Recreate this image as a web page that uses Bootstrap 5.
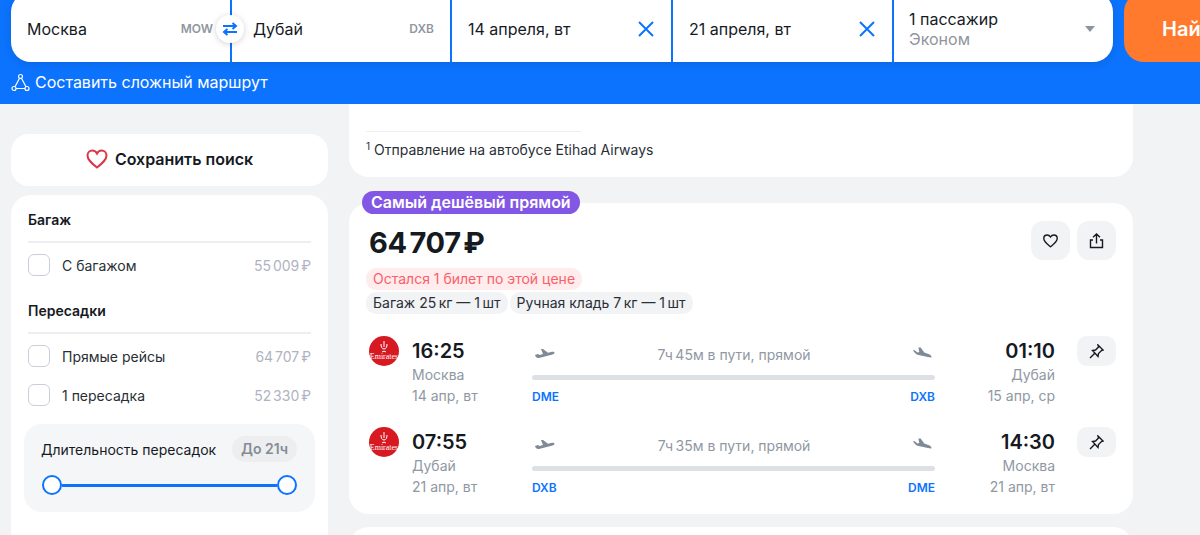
<!DOCTYPE html>
<html lang="ru">

<head>
    <meta charset="UTF-8">
    <meta name="viewport" content="width=device-width, initial-scale=1.0">
    <title>Авиабилеты Москва — Дубай</title>
    <link href="https://cdn.jsdelivr.net/npm/bootstrap@5.3.0/dist/css/bootstrap.min.css" rel="stylesheet">
    <style>
        html, body { height: 535px; overflow: hidden; }
        body { background: #f2f3f5; font-family: Inter, "Noto Sans", sans-serif; color: #161a1f; font-size: 14px; }

        /* шапка с поиском */
        .top-bar { background: #0c73fe; height: 104px; overflow: hidden; position: relative; z-index: 2; }
        .search-row { margin-top: -8px; padding-left: 11px; width: 1400px; height: 70px; }
        .search-form { width: 1102px; height: 70px; border-radius: 20px; overflow: hidden; box-shadow: 0 2px 8px rgba(0, 0, 0, .12); gap: 2px; }
        .search-field { background: #fff; height: 70px; padding: 4px 16px 0 16px; font-size: 16px; position: relative; }
        .f-from { width: 219px; padding-right: 17px; }
        .f-to { width: 218px; padding-left: 21px; }
        .f-date { width: 219px; }
        .f-pass { flex: 1; padding: 4px 18px 0 15px; }
        .iata { font-size: 12px; font-weight: 600; color: #9097a0; }
        .swap-btn { position: absolute; left: 205px; top: 23px; width: 28px; height: 28px; border-radius: 50%; background: #fff; box-shadow: 0 1px 6px rgba(0, 0, 0, .18); z-index: 3; }
        .pass-sub { color: #8f959c; font-size: 16px; line-height: 20px; }
        .pass-main { font-size: 16px; line-height: 20px; }
        .caret-down { width: 0; height: 0; border-left: 5px solid transparent; border-right: 5px solid transparent; border-top: 6px solid #8f959c; }
        .find-btn { margin-left: 11px; width: 180px; height: 70px; padding: 4px 0 0 38px; border-radius: 20px; background: #ff7a2d; color: #fff; font-size: 20px; font-weight: 600; }
        .route-link { color: #fff; font-size: 16px; line-height: 20px; padding: 10px 0 0 11px; gap: 5px; }

        /* колонки */
        .page-cols { padding-left: 11px; gap: 21px; }
        .side-col { width: 317px; padding-top: 30px; }
        .result-col { width: 784px; }

        .save-box { background: #fff; height: 52px; border-radius: 18px; font-size: 16px; font-weight: 600; gap: 7px; margin-bottom: 9px; padding-bottom: 3px; }
        .filter-box { background: #fff; border-radius: 20px; padding: 15px 17px 0 17px; height: 400px; }
        .filter-title { font-size: 14px; font-weight: 600; line-height: 20px; padding-bottom: 11px; border-bottom: 2px solid #eceef0; margin-bottom: 11px; }
        .filter-title-next { margin-top: 25px; }
        .filter-row { height: 22px; margin-bottom: 17px; font-size: 14px; color: #2a2f36; }
        .filter-row-last { margin-bottom: 18px; }
        .tick-box { width: 22px; height: 22px; border: 1px solid #c9ced8; border-radius: 6px; margin-right: 12px; flex-shrink: 0; background: #fff; }
        .filter-price { color: #afb3bf; font-size: 14px; margin-left: auto; word-spacing: -2px; }
        .duration-box { background: #f5f6f8; border-radius: 18px; margin: 0 -4px; padding: 12px 18px 0 17px; height: 88px; }
        .duration-tag { background: #eceef0; color: #858c95; font-weight: 600; border-radius: 13px; padding: 0 9px; line-height: 26px; font-size: 14px; }
        .range-line { margin: 13px 0 0 1px; height: 20px; }
        .range-thumb { width: 20px; height: 20px; border-radius: 50%; border: 2px solid #0c73fe; background: #fff; flex-shrink: 0; }
        .range-track { flex: 1; height: 3px; background: #0c73fe; }

        /* билеты */
        .ticket { background: #fff; border-radius: 20px; position: relative; }
        .ticket-prev { height: 73px; border-radius: 0 0 20px 20px; margin-bottom: 26px; padding: 27px 17px 0 17px; }
        .prev-note { border-top: 1px solid #eceef0; width: 215px; padding-top: 8px; white-space: nowrap; font-size: 14px; line-height: 20px; color: #2a2f36; }
        .prev-note sup { font-size: 10px; }
        .ticket-main { height: 311px; padding: 18px 17px 0 20px; margin-bottom: 13px; }
        .ticket-next { height: 40px; }
        .promo-tag { position: absolute; left: 13px; top: -12px; background: #8257e6; color: #fff; font-weight: 600; font-size: 16px; line-height: 23px; border-radius: 12px; padding: 0 9px; white-space: nowrap; }
        .price-big { font-size: 29px; font-weight: 700; line-height: 40px; padding-top: 1px; margin-top: 1px; word-spacing: -4px; letter-spacing: -.3px; height: 40px; }
        .round-btns { gap: 7px; }
        .round-btn { width: 39px; height: 39px; border-radius: 12px; background: #f2f3f5; }
        .red-line { margin: 6px 0 0 -3px; }
        .grey-line { margin: 2px 0 21px -3px; gap: 2px; }
        .pill-red { background: #ffeced; color: #f9606a; border-radius: 10px; padding: 0 7px; font-size: 14px; line-height: 22px; }
        .pill-grey { background: #f2f3f5; color: #2a2f36; border-radius: 10px; padding: 0 7px; font-size: 14px; line-height: 22px; }
        .flight-row { height: 91px; }
        .emirates-logo { width: 30px; height: 30px; border-radius: 50%; background: #d71a21; color: #fff; font-family: "Liberation Serif", serif; font-size: 8px; line-height: 8px; flex-shrink: 0; margin-top: 1px; }
        .time-col { width: 120px; margin-left: 13px; }
        .time-big { font-size: 20px; font-weight: 600; height: 29px; line-height: 32px; }
        .city-line { color: #8f98a3; font-size: 14px; line-height: 21px; }
        .middle-col { width: 403px; }
        .middle-head { height: 31px; color: #8f98a3; font-size: 14px; padding-top: 8px; }
        .plane-up { margin: -3px 0 0 2px; }
        .plane-down { margin: -3px 3px 0 0; }
        .path-bar { height: 5px; background: #dde0e5; border-radius: 3px; margin-top: 9px; }
        .iata-link { color: #0c73fe; font-size: 12px; font-weight: 600; line-height: 20px; margin-top: 7px; }
        .end-col { width: 120px; text-align: right; }
        .pin-btn { width: 39px; height: 30px; border-radius: 10px; background: #f2f3f5; margin: 1px 0 0 22px; }
    </style>
</head>

<body>
    <!-- Шапка -->
    <header class="top-bar">
        <div class="search-row d-flex">
            <div class="search-form d-flex position-relative">
                <div class="search-field f-from d-flex align-items-center justify-content-between"><span>Москва</span><span class="iata">MOW</span></div>
                <div class="swap-btn d-flex align-items-center justify-content-center">
                    <svg width="16" height="14" viewBox="0 0 16 14" fill="none" stroke="#0c73fe" stroke-width="2"><path d="M1 4h13M10.500 1L14 4l-3.500 3M15 10H2M5.500 7L2 10l3.500 3"/></svg>
                </div>
                <div class="search-field f-to d-flex align-items-center justify-content-between"><span>Дубай</span><span class="iata">DXB</span></div>
                <div class="search-field f-date d-flex align-items-center justify-content-between"><span>14 апреля, вт</span>
                    <svg width="18" height="18" viewBox="0 0 18 18" stroke="#0c73fe" stroke-width="2" fill="none"><path d="M2 2l14 14M16 2L2 16"/></svg>
                </div>
                <div class="search-field f-date d-flex align-items-center justify-content-between"><span>21 апреля, вт</span>
                    <svg width="18" height="18" viewBox="0 0 18 18" stroke="#0c73fe" stroke-width="2" fill="none"><path d="M2 2l14 14M16 2L2 16"/></svg>
                </div>
                <div class="search-field f-pass d-flex align-items-center justify-content-between">
                    <div><div class="pass-main">1 пассажир</div><div class="pass-sub">Эконом</div></div>
                    <span class="caret-down"></span>
                </div>
            </div>
            <div class="find-btn d-flex align-items-center">Найти</div>
        </div>
        <div class="route-link d-flex align-items-center">
            <svg width="19" height="19" viewBox="0 0 19 19" fill="none" stroke="#fff" stroke-width="1.200"><circle cx="9.500" cy="3.500" r="2"/><circle cx="3" cy="15.500" r="2"/><circle cx="16" cy="15.500" r="2"/><path d="M8.500 5.300L4 13.700M10.500 5.300L15 13.700M5 15.500h9"/></svg>
            <span>Составить сложный маршрут</span>
        </div>
    </header>

    <div class="page-cols d-flex">
        <!-- Фильтры -->
        <aside class="side-col">
            <div class="save-box d-flex align-items-center justify-content-center">
                <svg width="22" height="20" viewBox="0 0 22 20" fill="none" stroke="#dc3545" stroke-width="2"><path d="M11 18.500C6 14.500 1.500 11 1.500 6.500 1.500 3.500 3.700 1.500 6.300 1.500c2 0 3.700 1 4.700 3 1-2 2.700-3 4.700-3 2.600 0 4.800 2 4.800 5 0 4.500-4.500 8-9.500 12z"/></svg>
                <span>Сохранить поиск</span>
            </div>
            <div class="filter-box">
                <div class="filter-title">Багаж</div>
                <div class="filter-row d-flex align-items-center"><span class="tick-box"></span><span>С багажом</span><span class="filter-price">55 009 ₽</span></div>
                <div class="filter-title filter-title-next">Пересадки</div>
                <div class="filter-row d-flex align-items-center"><span class="tick-box"></span><span>Прямые рейсы</span><span class="filter-price">64 707 ₽</span></div>
                <div class="filter-row filter-row-last d-flex align-items-center"><span class="tick-box"></span><span>1 пересадка</span><span class="filter-price">52 330 ₽</span></div>
                <div class="duration-box">
                    <div class="d-flex align-items-center justify-content-between"><span>Длительность пересадок</span><span class="duration-tag">До 21ч</span></div>
                    <div class="range-line d-flex align-items-center"><span class="range-thumb"></span><span class="range-track"></span><span class="range-thumb"></span></div>
                </div>
            </div>
        </aside>

        <!-- Результаты -->
        <main class="result-col">
            <div class="ticket ticket-prev">
                <div class="prev-note"><sup>1</sup> Отправление на автобусе Etihad Airways</div>
            </div>

            <div class="ticket ticket-main">
                <span class="promo-tag">Самый дешёвый прямой</span>
                <div class="d-flex justify-content-between">
                    <div class="price-big">64 707 ₽</div>
                    <div class="d-flex round-btns">
                        <div class="round-btn d-flex align-items-center justify-content-center">
                            <svg width="15" height="14" viewBox="0 0 15 14" fill="none" stroke="#161a1f" stroke-width="1.400"><path d="M7.500 12.800C4 10 .8 7.700.8 4.500.8 2.400 2.400 1 4.200 1c1.400 0 2.500.7 3.300 2 .8-1.300 1.900-2 3.300-2 1.800 0 3.400 1.400 3.400 3.500 0 3.200-3.200 5.500-6.700 8.300z"/></svg>
                        </div>
                        <div class="round-btn d-flex align-items-center justify-content-center">
                            <svg width="15" height="16" viewBox="0 0 15 16" fill="none" stroke="#161a1f" stroke-width="1.400"><path d="M7.500 10.500V1M4 4.300L7.500 1 11 4.300M4 7H1.500v7.500h12V7H11"/></svg>
                        </div>
                    </div>
                </div>
                <div class="d-flex red-line"><span class="pill-red">Остался 1 билет по этой цене</span></div>
                <div class="d-flex grey-line"><span class="pill-grey">Багаж 25&#8201;кг — 1&#8201;шт</span><span class="pill-grey">Ручная кладь 7&#8201;кг — 1&#8201;шт</span></div>

                <div class="flight-row d-flex">
                    <div class="emirates-logo d-flex flex-column align-items-center justify-content-center">
                        <svg width="10" height="12" viewBox="0 0 10 12" fill="none" stroke="#fff" stroke-width="1"><path d="M5 0v6M2 3c0 3 1 5 3 5s3-2 3-5M3 11c1-1 3-1 4 0"/></svg>
                        <span>Emirates</span>
                    </div>
                    <div class="time-col">
                        <div class="time-big">16:25</div>
                        <div class="city-line">Москва</div>
                        <div class="city-line">14 апр, вт</div>
                    </div>
                    <div class="middle-col">
                        <div class="middle-head d-flex align-items-center">
                            <svg class="plane-up" width="22" height="12" viewBox="0 0 22 12" fill="#7f8a96"><path d="M1 8l3-1 1.500 1L9 7 7 2h2l5 3.800 4-1c1.500-.3 3 .3 2.500 1.500-.5.8-2 1.300-4 1.800L5 11c-2 .3-3.500-1-4-3z"/></svg>
                            <span class="flex-grow-1 text-center">7ч&#8201;45м в пути, прямой</span>
                            <svg class="plane-down" width="20" height="12" viewBox="0 0 22 12" fill="#7f8a96"><path d="M1 3h2l3 2.500 2-.5L7 0h2.500l4 5.500L18 7c2 .7 3.500 2 3.500 3.500 0 1-2 .5-4 0L6 8C4 7 2 5 1 3z"/></svg>
                        </div>
                        <div class="path-bar"></div>
                        <div class="iata-link d-flex justify-content-between"><span>DME</span><span>DXB</span></div>
                    </div>
                    <div class="end-col">
                        <div class="time-big">01:10</div>
                        <div class="city-line">Дубай</div>
                        <div class="city-line">15 апр, ср</div>
                    </div>
                    <div class="pin-btn d-flex align-items-center justify-content-center">
                        <svg width="15" height="15" viewBox="0 0 15 15" fill="none" stroke="#161a1f" stroke-width="1.400"><path d="M9 1l5 5-1.500.5-3 3-.5 3L3.500 6.500l3-.5 3-3zM5.500 9.500L1 14"/></svg>
                    </div>
                </div>

                <div class="flight-row d-flex">
                    <div class="emirates-logo d-flex flex-column align-items-center justify-content-center">
                        <svg width="10" height="12" viewBox="0 0 10 12" fill="none" stroke="#fff" stroke-width="1"><path d="M5 0v6M2 3c0 3 1 5 3 5s3-2 3-5M3 11c1-1 3-1 4 0"/></svg>
                        <span>Emirates</span>
                    </div>
                    <div class="time-col">
                        <div class="time-big">07:55</div>
                        <div class="city-line">Дубай</div>
                        <div class="city-line">21 апр, вт</div>
                    </div>
                    <div class="middle-col">
                        <div class="middle-head d-flex align-items-center">
                            <svg class="plane-up" width="22" height="12" viewBox="0 0 22 12" fill="#7f8a96"><path d="M1 8l3-1 1.500 1L9 7 7 2h2l5 3.800 4-1c1.500-.3 3 .3 2.500 1.500-.5.8-2 1.300-4 1.800L5 11c-2 .3-3.500-1-4-3z"/></svg>
                            <span class="flex-grow-1 text-center">7ч&#8201;35м в пути, прямой</span>
                            <svg class="plane-down" width="20" height="12" viewBox="0 0 22 12" fill="#7f8a96"><path d="M1 3h2l3 2.500 2-.5L7 0h2.500l4 5.500L18 7c2 .7 3.500 2 3.500 3.500 0 1-2 .5-4 0L6 8C4 7 2 5 1 3z"/></svg>
                        </div>
                        <div class="path-bar"></div>
                        <div class="iata-link d-flex justify-content-between"><span>DXB</span><span>DME</span></div>
                    </div>
                    <div class="end-col">
                        <div class="time-big">14:30</div>
                        <div class="city-line">Москва</div>
                        <div class="city-line">21 апр, вт</div>
                    </div>
                    <div class="pin-btn d-flex align-items-center justify-content-center">
                        <svg width="15" height="15" viewBox="0 0 15 15" fill="none" stroke="#161a1f" stroke-width="1.400"><path d="M9 1l5 5-1.500.5-3 3-.5 3L3.500 6.500l3-.5 3-3zM5.500 9.500L1 14"/></svg>
                    </div>
                </div>
            </div>

            <div class="ticket ticket-next"></div>
        </main>
    </div>

    <script src="https://cdn.jsdelivr.net/npm/bootstrap@5.3.0/dist/js/bootstrap.bundle.min.js"></script>
</body>

</html>
